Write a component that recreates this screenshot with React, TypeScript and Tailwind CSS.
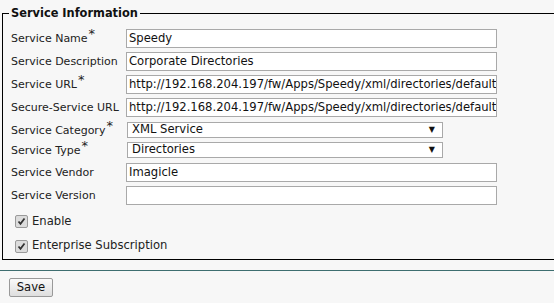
import React from 'react';

const font = { fontFamily: '"DejaVu Sans", Verdana, sans-serif' };

const url = 'http://192.168.204.197/fw/Apps/Speedy/xml/directories/default';

function Label({ text, required }: { text: string; required?: boolean }) {
  return (
    <div className="w-[115px] shrink-0 text-[11px] leading-[14px] text-[#222] whitespace-nowrap">
      {text}
      {required && <span className="relative top-[-4px] ml-[1px] text-[13px]">*</span>}
    </div>
  );
}

function TextRow({ label, value, required, mt }: { label: string; value: string; required?: boolean; mt: string }) {
  return (
    <div className={`flex items-center ${mt}`}>
      <Label text={label} required={required} />
      <div className="w-[371px] h-[19px] border border-[#a9a9a9] bg-white px-[2px] text-[11.6px] leading-[17px] text-[#111] overflow-hidden whitespace-nowrap">
        {value}
      </div>
    </div>
  );
}

function SelectRow({ label, value, mt }: { label: string; value: string; mt: string }) {
  return (
    <div className={`flex items-center ${mt}`}>
      <Label text={label} required />
      <div className="ml-[1px] w-[316px] h-[16px] border border-[#a9a9a9] bg-white pl-[4px] pr-[7px] flex items-center justify-between text-[11.6px] text-[#111]">
        <span>{value}</span>
        <span className="text-[8px] text-[#111]">▼</span>
      </div>
    </div>
  );
}

function Check({ label, mt }: { label: string; mt: string }) {
  return (
    <div className={`flex items-center ${mt} pl-[4px]`}>
      <span className="w-[13px] h-[13px] border border-[#9a9a9a] rounded-[2px] bg-[#dcdcdc] flex items-center justify-center">
        <svg width="9" height="9" viewBox="0 0 9 9">
          <path d="M1.5 4.5 L3.5 6.8 L7.5 1.5" stroke="#333" strokeWidth="1.8" fill="none" />
        </svg>
      </span>
      <span className="ml-[4px] text-[11.6px] text-[#222]">{label}</span>
    </div>
  );
}

export default function App() {
  return (
    <div className="w-[554px] h-[303px] bg-[#f7f7f7] overflow-hidden" style={font}>
      <fieldset className="ml-[2px] mt-[5px] w-[600px] h-[255px] border border-black p-0 m-0">
        <legend className="ml-[6px] px-[2px] text-[11.4px] font-bold text-[#111] leading-[16px]">
          Service Information
        </legend>
        <div className="pl-[8px]">
          <TextRow label="Service Name" value="Speedy" required mt="mt-[8px]" />
          <TextRow label="Service Description" value="Corporate Directories" mt="mt-[4px]" />
          <TextRow label="Service URL" value={url} required mt="mt-[4px]" />
          <TextRow label="Secure-Service URL" value={url} mt="mt-[4px]" />
          <SelectRow label="Service Category" value="XML Service" mt="mt-[5px]" />
          <SelectRow label="Service Type" value="Directories" mt="mt-[4px]" />
          <TextRow label="Service Vendor" value="Imagicle" mt="mt-[5px]" />
          <TextRow label="Service Version" value="" mt="mt-[4px]" />
          <Check label="Enable" mt="mt-[8px]" />
          <Check label="Enterprise Subscription" mt="mt-[7px]" />
        </div>
      </fieldset>
      <div className="mt-[10px] h-px bg-[#3e6e70]" />
      <div className="flex pl-[9px] pt-[7px]">
        <button className="h-[19px] w-[44px] border border-[#999] rounded-[2px] bg-gradient-to-b from-[#fafafa] to-[#dedede] text-[11.6px] text-[#111] leading-none">
          Save
        </button>
      </div>
    </div>
  );
}
